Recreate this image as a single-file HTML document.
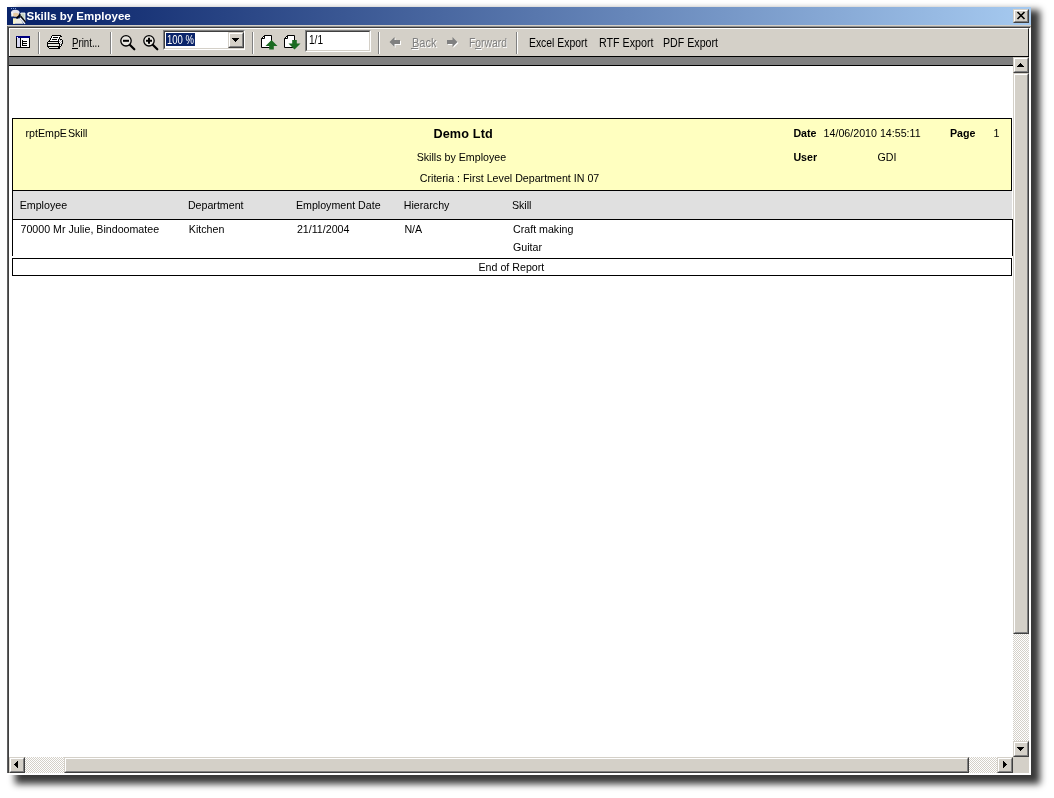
<!DOCTYPE html>
<html><head><meta charset="utf-8">
<style>
html,body{margin:0;padding:0;}
body{width:1054px;height:798px;background:#fff;position:relative;overflow:hidden;font-family:"Liberation Sans",sans-serif;font-size:11px;color:#000;}
.a{position:absolute;}
.t{position:absolute;white-space:nowrap;line-height:14px;filter:grayscale(1);}
#win{left:7px;top:7px;width:1024px;height:768px;background:#d4d0c8;}
#title{left:7px;top:7px;width:1024px;height:18px;background:linear-gradient(to right,#0a246a 0%,#0a246a 3%,#a6caf0 100%);}
#ttext{left:26.5px;top:9px;color:#fff;font-weight:bold;font-size:11.5px;}
.sep{position:absolute;top:32px;width:1px;height:22px;background:#808080;border-right:1px solid #fff;}
.rt{font-size:11px;}

.trk{position:absolute;background:repeating-conic-gradient(#ffffff 0% 25%,#d4d0c8 0% 50%) 0 0/2px 2px;}
.btn{position:absolute;box-sizing:border-box;background:#d4d0c8;border:1px solid;border-color:#d4d0c8 #404040 #404040 #d4d0c8;}
.btn:before{content:"";position:absolute;left:0;top:0;right:0;bottom:0;border:1px solid;border-color:#fff #808080 #808080 #fff;}
.arr{position:absolute;width:0;height:0;border:4px solid transparent;}

.r{position:absolute;filter:grayscale(1);white-space:pre;font-size:10.67px;line-height:12px;color:#000;}
.rb{font-weight:bold;}

.u{position:absolute;filter:grayscale(1);white-space:pre;font-size:12px;line-height:14px;color:#000;transform-origin:0 0;}
.dis{color:#808080;text-shadow:1px 1px 0 #fff;}
.sunk{position:absolute;box-sizing:border-box;background:#fff;border:1px solid;border-color:#808080 #fff #fff #808080;}
.sunk:before{content:"";position:absolute;left:0;top:0;right:0;bottom:0;border:1px solid;border-color:#404040 #d4d0c8 #d4d0c8 #404040;}
svg{position:absolute;overflow:visible;}
</style></head><body>
<div class="a" style="left:14.5px;top:10px;width:1025px;height:773.5px;background:rgba(0,0,0,.78);filter:blur(3.8px)"></div>
<div class="a" id="win"></div>
<div class="a" id="title"></div>
<div class="t" id="ttext">Skills by Employee</div>
<!-- frame lines -->
<div class="a" style="left:7px;top:25px;width:1024px;height:1px;background:#d4d0c8"></div>
<div class="a" style="left:7px;top:26px;width:1024px;height:1px;background:#909090"></div>
<div class="a" style="left:7px;top:27px;width:1023px;height:1px;background:#404040"></div>
<div class="a" style="left:7px;top:26px;width:1px;height:747px;background:#606060"></div>
<div class="a" style="left:8px;top:27px;width:1px;height:746px;background:#404040"></div>
<div class="a" style="left:1029px;top:28px;width:2px;height:747px;background:#fff"></div>
<div class="a" style="left:7px;top:773px;width:1024px;height:2px;background:#fff"></div>
<!-- toolbar -->
<div class="a" id="tb" style="left:9px;top:28px;width:1020px;height:28px;background:#d4d0c8;box-sizing:border-box;border-top:1px solid #fff;border-left:1px solid #fff;border-right:1px solid #202020;"></div>
<div class="a" style="left:9px;top:56px;width:1020px;height:1px;background:#000"></div>
<div class="a" style="left:9px;top:57px;width:1004px;height:8px;background:#808080"></div>
<div class="a" style="left:9px;top:65px;width:1004px;height:1px;background:#000"></div>
<!-- page -->
<div class="a" id="page" style="left:9px;top:66px;width:1004px;height:691px;background:#fff"></div>

<!-- vertical scrollbar -->
<div class="trk" style="left:1013px;top:57px;width:16px;height:700px"></div>
<div class="btn" style="left:1013px;top:57px;width:16px;height:16px"><svg style="left:3px;top:5px" width="7" height="4" shape-rendering="crispEdges"><path d="M3,0h1v1h1v1h1v1h1v1h-7v-1h1v-1h1v-1h1z" fill="#000"/></svg></div>
<div class="btn" style="left:1013px;top:73px;width:16px;height:561px"></div>
<div class="btn" style="left:1013px;top:741px;width:16px;height:16px"><svg style="left:3px;top:5px" width="7" height="4" shape-rendering="crispEdges"><path d="M0,0h7v1h-1v1h-1v1h-1v1h-1v-1h-1v-1h-1v-1h-1z" fill="#000"/></svg></div>
<!-- horizontal scrollbar -->
<div class="trk" style="left:9px;top:757px;width:1004px;height:16px"></div>
<div class="btn" style="left:9px;top:757px;width:16px;height:16px"><svg style="left:4px;top:3px" width="4" height="7" shape-rendering="crispEdges"><path d="M3,0h1v7h-1v-1h-1v-1h-1v-1h-1v-1h1v-1h1v-1h1z" fill="#000"/></svg></div>
<div class="btn" style="left:64px;top:757px;width:905px;height:16px"></div>
<div class="btn" style="left:997px;top:757px;width:16px;height:16px"><svg style="left:5px;top:3px" width="4" height="7" shape-rendering="crispEdges"><path d="M0,0h1v1h1v1h1v1h1v1h-1v1h-1v1h-1v1h-1z" fill="#000"/></svg></div>
<div class="a" style="left:1013px;top:757px;width:16px;height:16px;background:#d4d0c8"></div>
<!-- report -->
<div class="a" style="left:12px;top:118px;width:1000px;height:73px;box-sizing:border-box;border:1px solid #000;background:#ffffc0"></div>
<div class="a" style="left:12px;top:191px;width:1000px;height:28px;background:#e0e0e0"></div>
<div class="a" style="left:12px;top:191px;width:1px;height:65px;background:#000"></div>
<div class="a" style="left:12px;top:219px;width:1001px;height:1px;background:#000"></div>
<div class="a" style="left:1012px;top:219px;width:1px;height:37px;background:#000"></div>
<div class="a" style="left:12px;top:258px;width:1000px;height:18px;box-sizing:border-box;border:1px solid #000;background:#fff"></div>
<div class="r" style="left:25.5px;top:127px;word-spacing:-2px;">rptEmpE Skill</div>
<div class="r rb" style="left:433.4px;top:128px;font-size:12.67px;letter-spacing:0.15px;">Demo Ltd</div>
<div class="r rb" style="left:793.4px;top:127px;">Date</div>
<div class="r" style="left:823.6px;top:127px;">14/06/2010 14:55:11</div>
<div class="r rb" style="left:950px;top:127px;">Page</div>
<div class="r" style="left:993.5px;top:127px;">1</div>
<div class="r" style="left:416.7px;top:151px;">Skills by Employee</div>
<div class="r rb" style="left:793.4px;top:151px;">User</div>
<div class="r" style="left:877.5px;top:151px;">GDI</div>
<div class="r" style="left:419.8px;top:172px;">Criteria : First Level Department IN 07</div>
<div class="r" style="left:19.7px;top:199px;">Employee</div>
<div class="r" style="left:187.9px;top:199px;">Department</div>
<div class="r" style="left:295.9px;top:199px;">Employment Date</div>
<div class="r" style="left:403.8px;top:199px;">Hierarchy</div>
<div class="r" style="left:511.9px;top:199px;">Skill</div>
<div class="r" style="left:20.5px;top:223px;">70000 Mr Julie, Bindoomatee</div>
<div class="r" style="left:188.8px;top:223px;">Kitchen</div>
<div class="r" style="left:296.9px;top:223px;">21/11/2004</div>
<div class="r" style="left:404.4px;top:223px;">N/A</div>
<div class="r" style="left:513px;top:223px;">Craft making</div>
<div class="r" style="left:513px;top:241px;">Guitar</div>
<div class="r" style="left:478.5px;top:261px;">End of Report</div>
<!-- toolbar items -->
<div class="sep" style="left:38px"></div>
<div class="sep" style="left:110px"></div>
<div class="sep" style="left:252px"></div>
<div class="sep" style="left:378px"></div>
<div class="sep" style="left:516px"></div>
<svg style="left:16px;top:36px" width="14" height="12" shape-rendering="crispEdges">
<rect x="0" y="0" width="14" height="12" fill="#000"/>
<rect x="0" y="0" width="14" height="2" fill="#000080"/>
<rect x="1" y="1" width="1" height="1" fill="#fff"/>
<rect x="1" y="2" width="3" height="9" fill="#d8d8f0"/>
<rect x="5" y="2" width="8" height="9" fill="#fff"/>
<rect x="6" y="4" width="1" height="6" fill="#000"/>
<rect x="6" y="5" width="5" height="1" fill="#000"/>
<rect x="6" y="7" width="5" height="1" fill="#000"/>
<rect x="6" y="9" width="5" height="1" fill="#000"/>
</svg>
<svg style="left:47px;top:35px" width="17" height="14" shape-rendering="crispEdges"><rect x="5" y="0" width="9" height="1" fill="#000"/><rect x="4" y="1" width="1" height="1" fill="#000"/><rect x="5" y="1" width="8" height="1" fill="#fff"/><rect x="13" y="1" width="2" height="1" fill="#000"/><rect x="4" y="2" width="1" height="1" fill="#000"/><rect x="5" y="2" width="1" height="1" fill="#fff"/><rect x="6" y="2" width="5" height="1" fill="#000"/><rect x="11" y="2" width="1" height="1" fill="#fff"/><rect x="12" y="2" width="1" height="1" fill="#000"/><rect x="3" y="3" width="1" height="1" fill="#000"/><rect x="4" y="3" width="8" height="1" fill="#fff"/><rect x="12" y="3" width="1" height="1" fill="#000"/><rect x="3" y="4" width="1" height="1" fill="#000"/><rect x="4" y="4" width="1" height="1" fill="#fff"/><rect x="5" y="4" width="5" height="1" fill="#000"/><rect x="10" y="4" width="1" height="1" fill="#fff"/><rect x="11" y="4" width="1" height="1" fill="#000"/><rect x="12" y="4" width="1" height="1" fill="#a0a0a0"/><rect x="13" y="4" width="2" height="1" fill="#000"/><rect x="2" y="5" width="1" height="1" fill="#000"/><rect x="3" y="5" width="8" height="1" fill="#fff"/><rect x="11" y="5" width="1" height="1" fill="#000"/><rect x="12" y="5" width="1" height="1" fill="#fff"/><rect x="13" y="5" width="1" height="1" fill="#a0a0a0"/><rect x="14" y="5" width="1" height="1" fill="#fff"/><rect x="15" y="5" width="1" height="1" fill="#000"/><rect x="1" y="6" width="11" height="1" fill="#000"/><rect x="12" y="6" width="1" height="1" fill="#a0a0a0"/><rect x="13" y="6" width="1" height="1" fill="#fff"/><rect x="14" y="6" width="1" height="1" fill="#a0a0a0"/><rect x="15" y="6" width="1" height="1" fill="#000"/><rect x="0" y="7" width="1" height="1" fill="#000"/><rect x="1" y="7" width="10" height="1" fill="#e8e8e0"/><rect x="11" y="7" width="1" height="1" fill="#000"/><rect x="12" y="7" width="1" height="1" fill="#fff"/><rect x="13" y="7" width="1" height="1" fill="#a0a0a0"/><rect x="14" y="7" width="1" height="1" fill="#fff"/><rect x="15" y="7" width="1" height="1" fill="#000"/><rect x="0" y="8" width="13" height="1" fill="#000"/><rect x="13" y="8" width="1" height="1" fill="#fff"/><rect x="14" y="8" width="1" height="1" fill="#a0a0a0"/><rect x="15" y="8" width="1" height="1" fill="#000"/><rect x="0" y="9" width="1" height="1" fill="#000"/><rect x="1" y="9" width="11" height="1" fill="#e8e8e0"/><rect x="12" y="9" width="1" height="1" fill="#000"/><rect x="13" y="9" width="1" height="1" fill="#a0a0a0"/><rect x="14" y="9" width="1" height="1" fill="#000"/><rect x="0" y="10" width="1" height="1" fill="#000"/><rect x="1" y="10" width="11" height="1" fill="#e8e8e0"/><rect x="12" y="10" width="1" height="1" fill="#000"/><rect x="13" y="10" width="1" height="1" fill="#fff"/><rect x="14" y="10" width="1" height="1" fill="#000"/><rect x="0" y="11" width="14" height="1" fill="#000"/><rect x="1" y="12" width="1" height="1" fill="#000"/><rect x="2" y="12" width="9" height="1" fill="#e8e8e0"/><rect x="11" y="12" width="2" height="1" fill="#000"/><rect x="2" y="13" width="11" height="1" fill="#000"/></svg>
<div class="u" style="left:72px;top:36px;transform:scaleX(0.807);">Print...</div>
<div class="a" style="left:72px;top:48px;width:6px;height:1px;background:#000"></div>
<svg style="left:119px;top:34px" width="17" height="17">
<circle cx="7" cy="6.8" r="5.2" fill="#e8e6e0" stroke="#000" stroke-width="1.3"/>
<path d="M11,11 L15.3,15.3" stroke="#000" stroke-width="2.2" stroke-linecap="round"/>
<path d="M4,6.8 H10" stroke="#000" stroke-width="2"/>
</svg>
<svg style="left:142px;top:34px" width="17" height="17">
<circle cx="7" cy="6.8" r="5.2" fill="#e8e6e0" stroke="#000" stroke-width="1.3"/>
<path d="M11,11 L15.3,15.3" stroke="#000" stroke-width="2.2" stroke-linecap="round"/>
<path d="M4,6.8 H10 M7,3.8 V9.8" stroke="#000" stroke-width="2"/>
</svg>
<div class="sunk" style="left:163px;top:30px;width:82px;height:20px"></div>
<div class="a" style="left:166px;top:33px;width:29px;height:13px;background:#0a246a"></div>
<div class="u" style="left:167px;top:33px;transform:scaleX(0.793);color:#fff;">100 %</div>
<div class="btn" style="left:228px;top:32px;width:16px;height:16px"><svg style="left:3px;top:5px" width="7" height="4" shape-rendering="crispEdges"><path d="M0,0h7v1h-1v1h-1v1h-1v1h-1v-1h-1v-1h-1v-1h-1z" fill="#000"/></svg></div>
<svg style="left:261px;top:35px" width="17" height="15">
<path d="M3.5,0.5 H10.500 V12.5 H0.5 V3.5 Z" fill="#fff" stroke="#000" stroke-width="1"/>
<path d="M3.5,0.5 V3.5 H0.5" fill="none" stroke="#000" stroke-width="1"/>
<path d="M10.5,5 L16.5,11 H12.8 V14.5 H8.2 V11 H4.5 Z" fill="#1b6b22"/>
</svg>
<svg style="left:284px;top:35px" width="17" height="15">
<path d="M3.5,0.5 H10.500 V12.5 H0.5 V3.5 Z" fill="#fff" stroke="#000" stroke-width="1"/>
<path d="M3.5,0.5 V3.5 H0.5" fill="none" stroke="#000" stroke-width="1"/>
<path d="M8.200,5 H12.8 V8.5 H16.5 L10.5,14.5 L4.5,8.5 H8.2 Z" fill="#1b6b22"/>
</svg>
<div class="sunk" style="left:305px;top:30px;width:66px;height:22px"></div>
<div class="u" style="left:309px;top:33px;transform:scaleX(0.839);">1/1</div>
<svg style="left:389px;top:37px" width="13" height="12">
<path d="M1.5,6 L6.5,1 V4 H12 V8 H6.5 V11 Z" fill="#fff"/>
<path d="M0.5,5 L5.5,0 V3 H11 V7 H5.5 V10 Z" fill="#808080"/>
</svg>
<svg style="left:447px;top:37px" width="13" height="12">
<path d="M11.5,6 L6.5,1 V4 H1 V8 H6.5 V11 Z" fill="#fff"/>
<path d="M10.5,5 L5.5,0 V3 H0 V7 H5.5 V10 Z" fill="#808080"/>
</svg>
<div class="u dis" style="left:411.5px;top:36px;transform:scaleX(0.918);">Back</div>
<div class="a" style="left:411px;top:48px;width:7px;height:1px;background:#808080;box-shadow:1px 1px 0 #fff"></div>
<div class="u dis" style="left:469px;top:36px;transform:scaleX(0.863);">Forward</div>
<div class="a" style="left:475px;top:48px;width:6px;height:1px;background:#808080;box-shadow:1px 1px 0 #fff"></div>
<div class="u" style="left:528.5px;top:36px;transform:scaleX(0.865);">Excel Export</div>
<div class="u" style="left:598.5px;top:36px;transform:scaleX(0.892);">RTF Export</div>
<div class="u" style="left:663px;top:36px;transform:scaleX(0.887);">PDF Export</div>
<div class="btn" style="left:1013px;top:9px;width:16px;height:14px"></div>
<svg style="left:1017px;top:12px" width="8" height="7"><path d="M0.5,0 L7.5,7 M7.500,0 L0.500,7" stroke="#000" stroke-width="1.6"/></svg>
<svg style="left:10px;top:8px" width="16" height="16">
<rect x="1" y="0" width="1" height="1" fill="#7f9fd8"/><rect x="3" y="0" width="1" height="1" fill="#7f9fd8"/><rect x="5" y="0" width="1" height="1" fill="#7f9fd8"/>
<polygon points="3,10.5 10,10.5 13.500,15.8 3,15.8" fill="#ecece4"/>
<polygon points="3,10.5 6,10.5 5,15.8 3,15.8" fill="#f6f2c4"/>
<polygon points="10.8,5 15,5 15,14 10.8,9" fill="#c4d2c4" stroke="#fff" stroke-width="0.8"/>
<ellipse cx="5.3" cy="4.3" rx="4.2" ry="2.6" fill="#e4e4ee"/>
<ellipse cx="5.600" cy="6.800" rx="3.200" ry="2" fill="#e6c9a0"/>
<rect x="1.2" y="4" width="2" height="4.5" fill="#f4f4f4"/>
<path d="M10,9.800 L15,15.800" stroke="#fff" stroke-width="1.300"/>
<path d="M6.500,10.300 L10.500,6.500" stroke="#000" stroke-width="1.600"/>
<path d="M10.500,8 L15.500,14" stroke="#000" stroke-width="1.200"/>
</svg>
</body></html>
